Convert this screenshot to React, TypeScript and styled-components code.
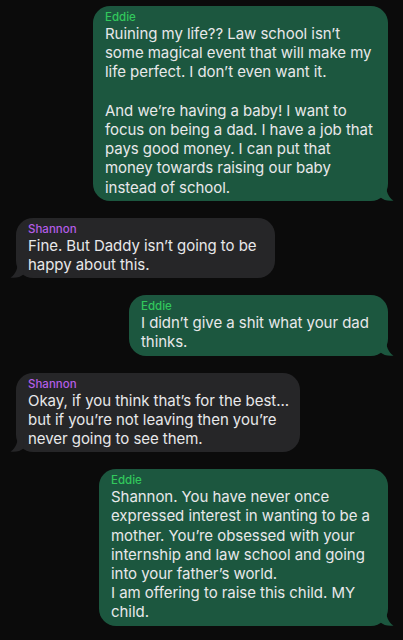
import React from 'react';
import styled, { createGlobalStyle } from 'styled-components';

const GlobalStyle = createGlobalStyle`
    html, body {
        margin: 0;
        padding: 0;
        background: #0b0b0b;
    }
`;

const Screen = styled.main`
    width: 403px;
    height: 640px;
    overflow: hidden;
    background: #0b0b0b;
    box-sizing: border-box;
    padding: 6px 15px 0 16px;
    display: flex;
    flex-direction: column;
    gap: 17px;
    font-family: Inter, "Liberation Sans", sans-serif;
`;

const Row = styled.div<{ $mine: boolean }>`
    display: flex;
    justify-content: ${(p) => (p.$mine ? 'flex-end' : 'flex-start')};
`;

const Bubble = styled.div<{ $mine: boolean; $width: number }>`
    position: relative;
    width: ${(p) => p.$width}px;
    box-sizing: border-box;
    padding: 4px 12px 4px 12px;
    border-radius: 17px;
    background: ${(p) => (p.$mine ? '#1c573f' : '#262628')};
`;

const Tail = styled.svg<{ $mine: boolean }>`
    position: absolute;
    bottom: 0;
    width: 14px;
    height: 18px;
    ${(p) => (p.$mine ? 'right: -6px;' : 'left: -6px; transform: scaleX(-1);')}
`;

const Sender = styled.div<{ $mine: boolean }>`
    font-size: 11.5px;
    line-height: 14px;
    font-weight: 500;
    color: ${(p) => (p.$mine ? '#32c85c' : '#b45de6')};
`;

const Body = styled.div`
    font-size: 15px;
    line-height: 19.2px;
    color: #e8e8ea;
    white-space: nowrap;
    letter-spacing: -0.05px;
`;

type Message = {
    mine: boolean;
    width: number;
    lines: string[];
};

const messages: Message[] = [
    {
        mine: true,
        width: 295,
        lines: [
            'Ruining my life?? Law school isn\u2019t',
            'some magical event that will make my',
            'life perfect. I don\u2019t even want it.',
            '',
            'And we\u2019re having a baby! I want to',
            'focus on being a dad. I have a job that',
            'pays good money. I can put that',
            'money towards raising our baby',
            'instead of school.',
        ],
    },
    {
        mine: false,
        width: 259,
        lines: ['Fine. But Daddy isn\u2019t going to be', 'happy about this.'],
    },
    {
        mine: true,
        width: 259,
        lines: ['I didn\u2019t give a shit what your dad', 'thinks.'],
    },
    {
        mine: false,
        width: 284,
        lines: [
            'Okay, if you think that\u2019s for the best...',
            'but if you\u2019re not leaving then you\u2019re',
            'never going to see them.',
        ],
    },
    {
        mine: true,
        width: 289,
        lines: [
            'Shannon. You have never once',
            'expressed interest in wanting to be a',
            'mother. You\u2019re obsessed with your',
            'internship and law school and going',
            'into your father\u2019s world.',
            'I am offering to raise this child. MY',
            'child.',
        ],
    },
];

const App = () => (
    <>
        <GlobalStyle />
        <Screen>
            {messages.map((m, i) => (
                <Row key={i} $mine={m.mine}>
                    <Bubble $mine={m.mine} $width={m.width}>
                        <Sender $mine={m.mine}>{m.mine ? 'Eddie' : 'Shannon'}</Sender>
                        <Body>
                            {m.lines.map((l, j) => (
                                <div key={j}>{l || '\u00a0'}</div>
                            ))}
                        </Body>
                        <Tail $mine={m.mine} viewBox="0 0 14 18">
                            <path
                                d="M0 0 L6 0 C6 8 8 14 13.5 17.6 C8 18.4 3.5 17 0.5 14.5 Z"
                                fill={m.mine ? '#1c573f' : '#262628'}
                            />
                        </Tail>
                    </Bubble>
                </Row>
            ))}
        </Screen>
    </>
);

export default App;
